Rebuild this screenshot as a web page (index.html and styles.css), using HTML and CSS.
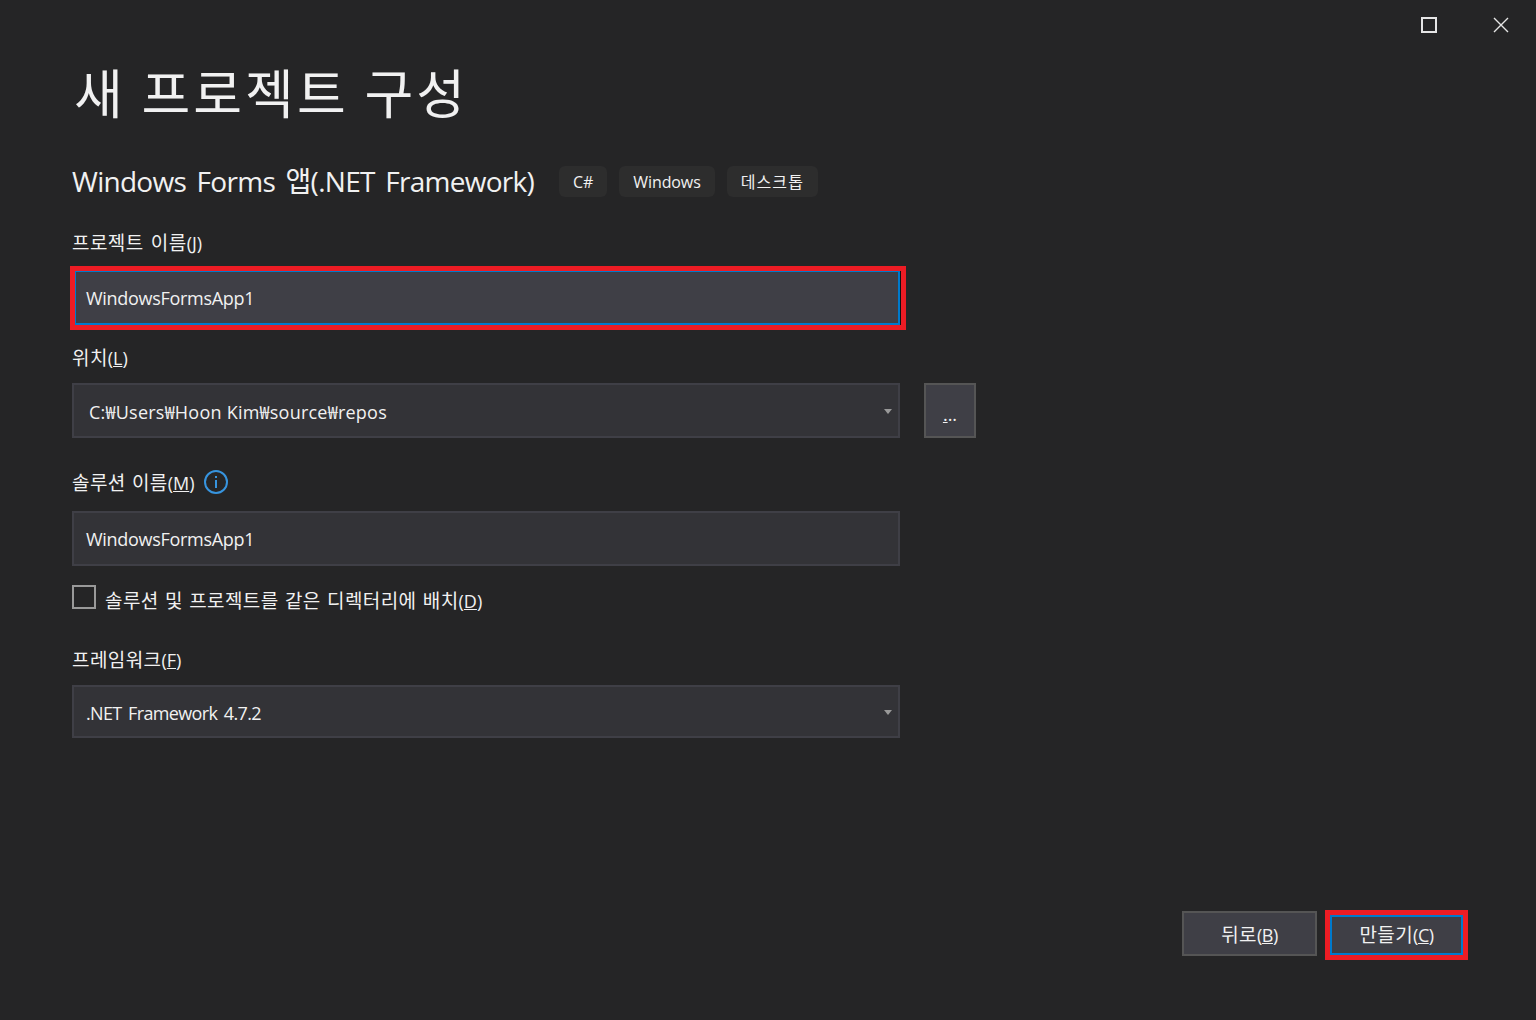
FILE: index.html
```html
<!DOCTYPE html>
<html lang="ko">
<head>
<meta charset="utf-8">
<title>새 프로젝트 구성</title>
<link rel="stylesheet" href="styles.css">
</head>
<body>
<div class="window">
  <div class="controls">
    <svg class="ctl" width="16" height="16" viewBox="0 0 16 16"><rect x="1" y="1" width="14" height="14" fill="none" stroke="#e6e6e6" stroke-width="2"/></svg>
    <svg class="ctl" width="16" height="16" viewBox="0 0 16 16"><path d="M1 1 L15 15 M15 1 L1 15" fill="none" stroke="#e6e6e6" stroke-width="1.4"/></svg>
  </div>
  <h1 class="title">새 프로젝트 구성</h1>
  <div class="subtitle">
    <h2 class="subtitle-text">Windows Forms 앱(.NET Framework)</h2>
    <div class="chips">
      <span class="chip">C#</span>
      <span class="chip">Windows</span>
      <span class="chip chip-ko">데스크톱</span>
    </div>
  </div>
  <div class="form">
    <label class="label label-project">프로젝트 이름<span class="key">(<u>J</u>)</span></label>
    <div class="highlight highlight-field">
      <div class="field field-focus">WindowsFormsApp1</div>
    </div>
    <label class="label label-location">위치<span class="key">(<u>L</u>)</span></label>
    <div class="row">
      <div class="field combo combo-location">C:₩Users₩Hoon Kim₩source₩repos<span class="arrow"></span></div>
      <div class="browse"><span class="dots"><u>.</u>..</span></div>
    </div>
    <div class="label label-solution">
      <span class="label-inner">솔루션 이름<span class="key">(<u>M</u>)</span></span>
      <svg class="info" width="24" height="24" viewBox="0 0 24 24"><circle cx="12" cy="12" r="11" fill="none" stroke="#3794de" stroke-width="2"/><rect x="11" y="10" width="2" height="8" fill="#3794de"/><rect x="11" y="6" width="2" height="2" fill="#3794de"/></svg>
    </div>
    <div class="field field-solution">WindowsFormsApp1</div>
    <div class="check-row">
      <span class="checkbox"></span>
      <span class="check-text">솔루션 및 프로젝트를 같은 디렉터리에 배치<span class="key">(<u>D</u>)</span></span>
    </div>
    <label class="label label-framework">프레임워크<span class="key">(<u>F</u>)</span></label>
    <div class="field combo combo-framework">.NET Framework 4.7.2<span class="arrow"></span></div>
  </div>
  <div class="footer">
    <div class="btn btn-back">뒤로<span class="key">(<u>B</u>)</span></div>
    <div class="highlight highlight-btn">
      <div class="btn btn-create">만들기<span class="key">(<u>C</u>)</span></div>
    </div>
  </div>
</div>
</body>
</html>
```
FILE: styles.css
```css
* { box-sizing: border-box; }
html, body { margin: 0; padding: 0; height: 100%; }
body {
  background: #252526;
  color: #f1f1f1;
  font-family: "Open Sans", "Noto Sans CJK KR", sans-serif;
  overflow: hidden;
}
.window {
  height: 1020px;
  display: flex;
  flex-direction: column;
  padding-left: 72px;
  padding-bottom: 60px;
}
.controls {
  display: flex;
  justify-content: flex-end;
  gap: 56px;
  padding: 17px 27px 0 0;
  height: 60px;
}
.ctl { display: block; }
.title {
  margin: 0;
  padding-left: 2px;
  height: 65px;
  line-height: 63px;
  font-size: 53px;
  font-weight: 400;
  letter-spacing: 3px;
  word-spacing: -2px;
  font-family: "Noto Sans CJK KR", sans-serif;
}
.subtitle {
  display: flex;
  align-items: center;
  margin-top: 41px;
  height: 31px;
}
.subtitle-text {
  margin: 0;
  font-size: 28px;
  font-weight: 400;
  line-height: 31px;
  letter-spacing: -0.72px;
  word-spacing: 4px;
  white-space: nowrap;
}
.chips { display: flex; gap: 12px; margin-left: 25px; }
.chip {
  height: 31px;
  padding: 0 14px;
  line-height: 33px;
  font-size: 16px;
  letter-spacing: -0.1px;
  background: #2d2d2d;
  border-radius: 6px;
}
.chip-ko { letter-spacing: 1.1px; }
.form { width: 904px; display: flex; flex-direction: column; align-items: flex-start; }
.label {
  display: flex;
  align-items: center;
  height: 26px;
  font-size: 19px;
  letter-spacing: 0.4px;
  word-spacing: 2px;
  line-height: 26px;
  white-space: nowrap;
}
.key { font-size: 18px; letter-spacing: 0; }
.label-project { margin-top: 33px; }
.label-location { margin-top: 15px; }
.label-solution { margin-top: 31px; gap: 9px; word-spacing: 1px; }
.label-inner { padding-top: 2px; }
.label-framework { margin-top: 38px; }
.highlight { border: 5px solid #ed1c24; }
.highlight-field {
  margin: 10px 0 0 -2px;
  width: 836px;
  height: 64px;
  border-right-width: 6px;
}
.field {
  width: 828px;
  height: 55px;
  background: #333337;
  border: 2px solid #3f3f46;
  padding: 0 12px;
  line-height: 53px;
  font-size: 18px;
  letter-spacing: -0.3px;
  color: #f1f1f1;
  white-space: nowrap;
  position: relative;
}
.field-focus {
  width: 825px;
  height: 54px;
  background: #3f3f46;
  border: solid #007acc;
  border-width: 1px 2px 2px 1px;
  padding: 0 10px;
  box-shadow: 1px 0 0 #111;
}
.row {
  display: flex;
  gap: 24px;
  margin-top: 12px;
}
.combo-location { padding-left: 15px; line-height: 55px; letter-spacing: 0.23px; }
.combo-framework { height: 53px; margin-top: 12px; line-height: 53px; letter-spacing: -0.65px; word-spacing: 2.5px; }
.arrow {
  position: absolute;
  right: 6px;
  top: 24px;
  width: 0;
  height: 0;
  border-left: 4.5px solid transparent;
  border-right: 4.5px solid transparent;
  border-top: 5px solid #999;
}
.combo-framework .arrow { top: 23px; }
.browse {
  width: 52px;
  height: 55px;
  background: #3f3f46;
  border: 2px solid #555;
  text-align: center;
  font-size: 18px;
  line-height: 58px;
}
.field-solution { margin-top: 16px; }
.info { display: block; }
.check-row { display: flex; align-items: center; margin-top: 19px; height: 24px; }
.checkbox {
  width: 24px;
  height: 24px;
  border: 2px solid #999;
  background: #252526;
  flex: none;
}
.check-text { margin-left: 9px; font-size: 19px; letter-spacing: 0.4px; word-spacing: 1px; line-height: 30px; position: relative; top: 4px; white-space: nowrap; }
.footer {
  margin-top: auto;
  display: flex;
  justify-content: flex-end;
  align-items: flex-start;
  padding-right: 68px;
  gap: 8px;
}
.btn {
  background: #3f3f46;
  font-size: 19px;
  letter-spacing: 0.4px;
  text-align: center;
  white-space: nowrap;
}
.btn .key { letter-spacing: -0.5px; }
.btn-back {
  margin-top: 1px;
  width: 135px;
  height: 45px;
  line-height: 45px;
  border: 2px solid #555;
}
.highlight-btn { width: 143px; height: 50px; }
.btn-create {
  width: 133px;
  height: 40px;
  line-height: 37px;
  border: 2px solid #007acc;
}
```
